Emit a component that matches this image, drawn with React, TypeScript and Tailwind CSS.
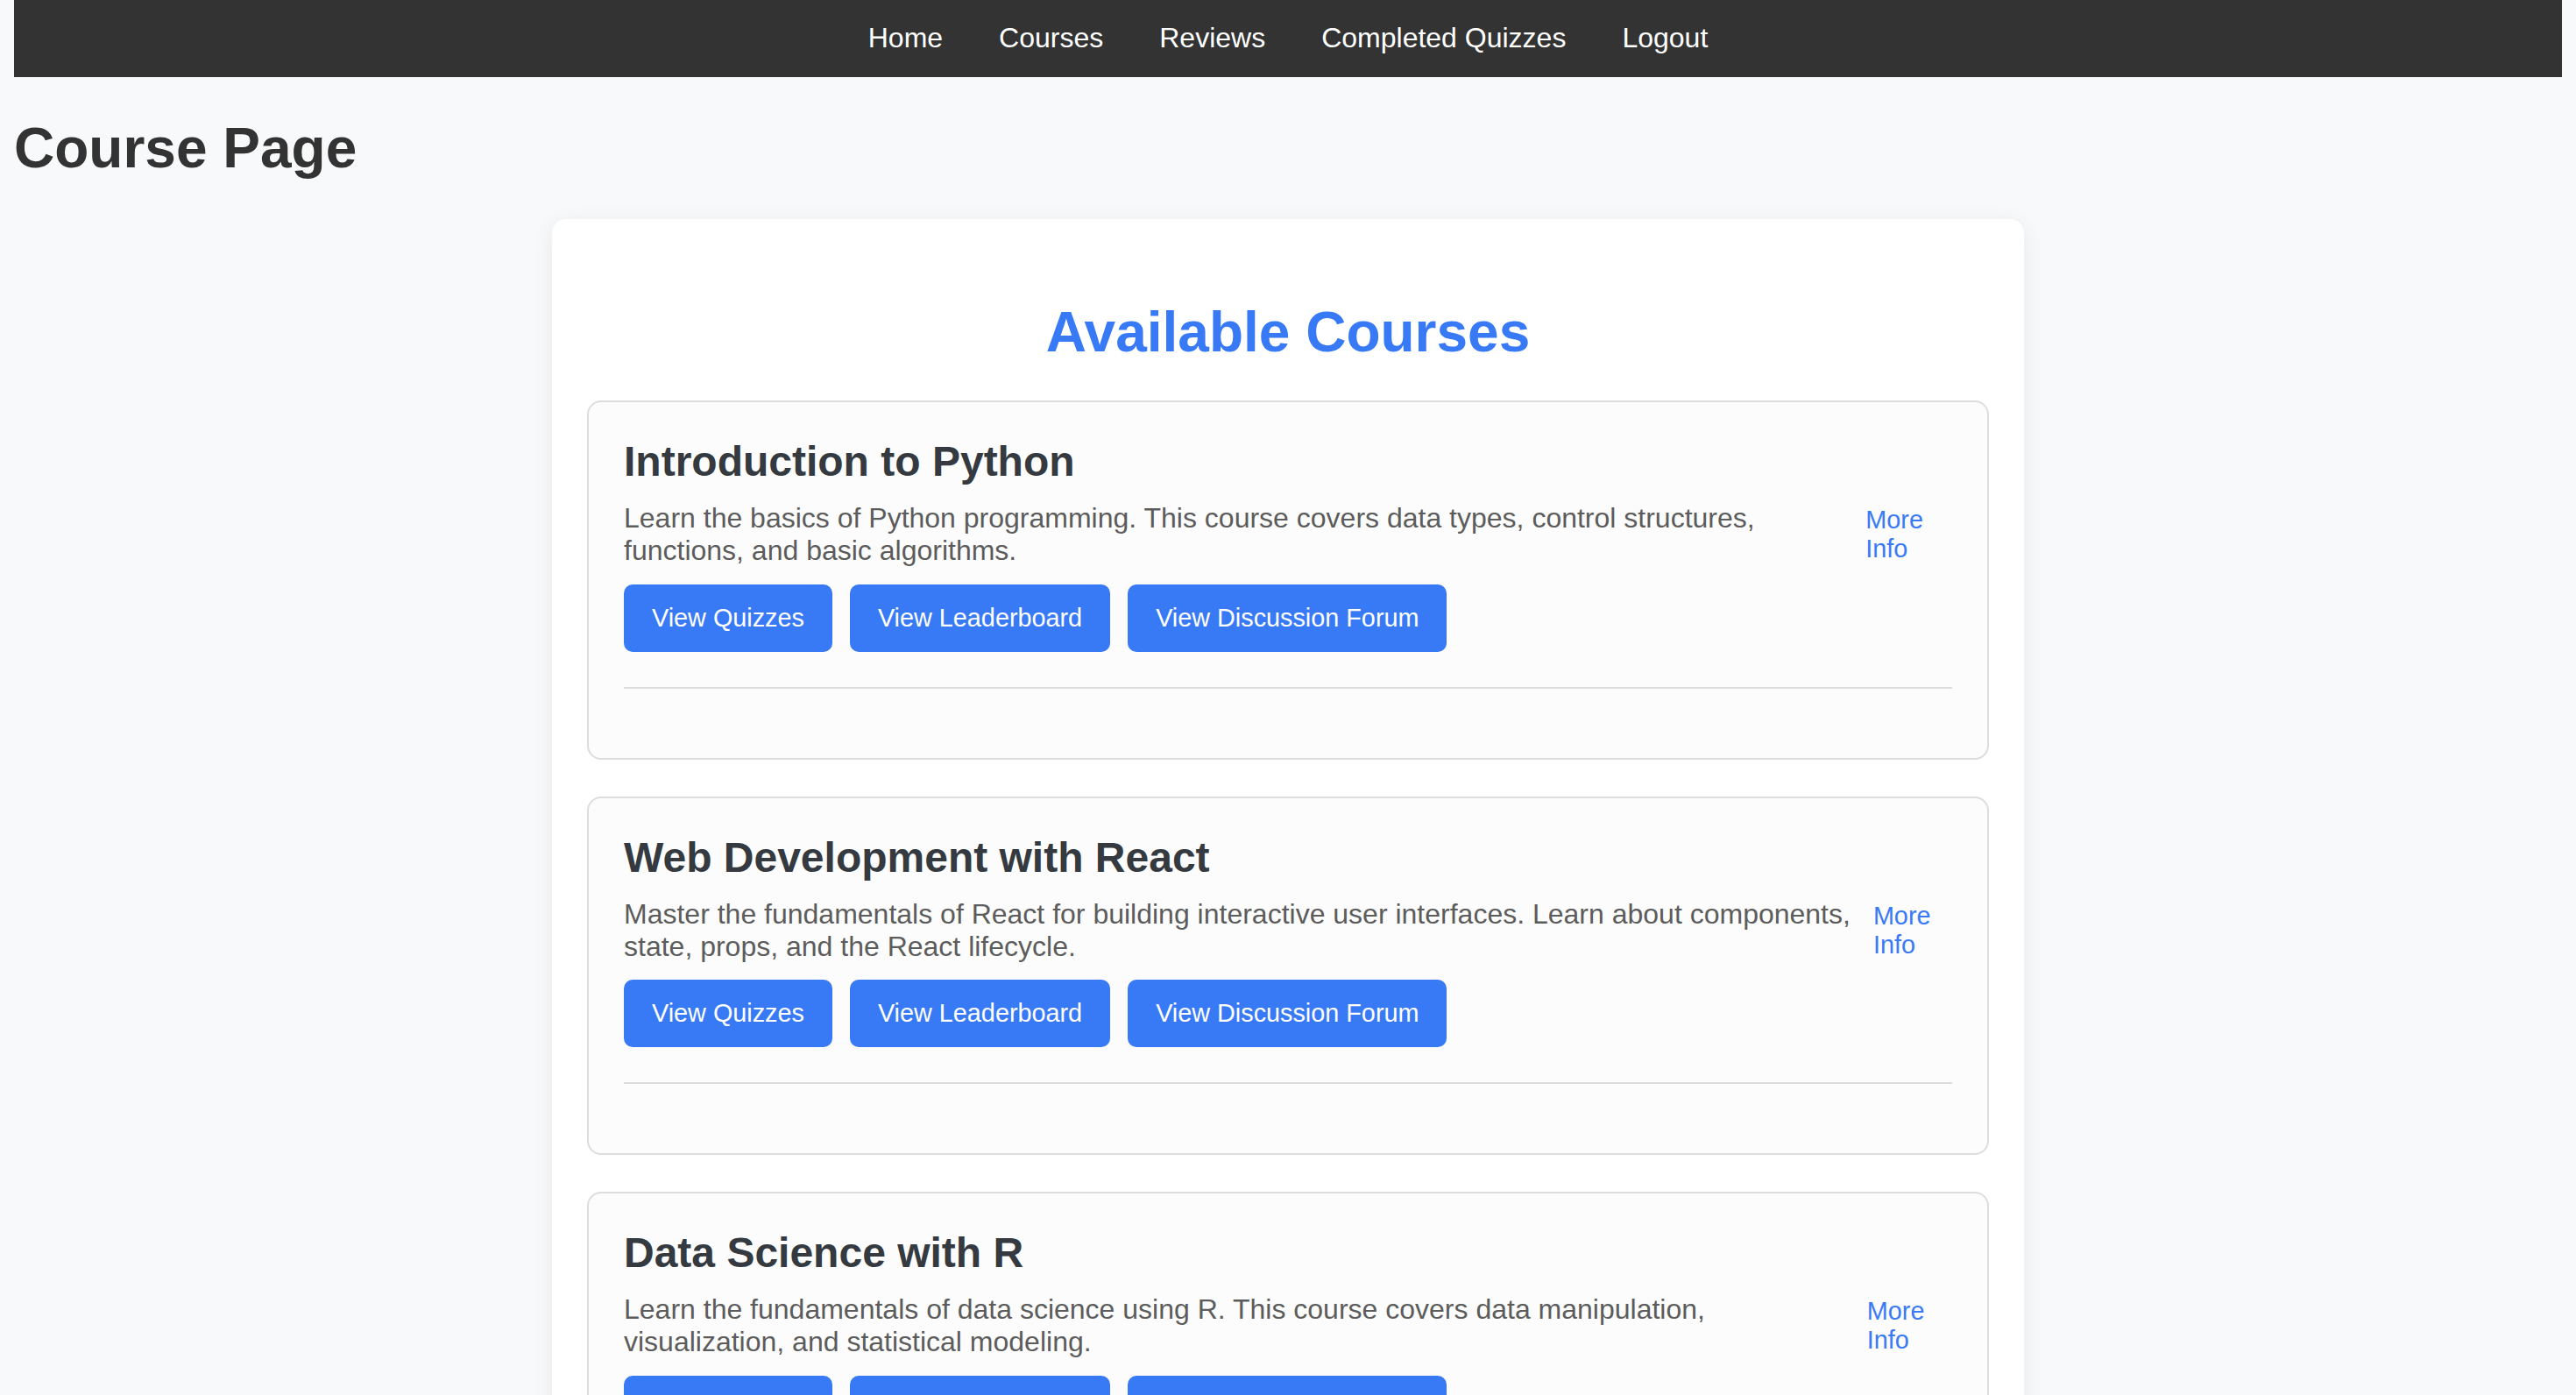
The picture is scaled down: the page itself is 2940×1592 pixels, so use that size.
import React from "react";

type Course = {
  id: number;
  title: string;
  description: string;
};

const courses: Course[] = [
  {
    id: 1,
    title: "Introduction to Python",
    description:
      "Learn the basics of Python programming. This course covers data types, control structures, functions, and basic algorithms.",
  },
  {
    id: 2,
    title: "Web Development with React",
    description:
      "Master the fundamentals of React for building interactive user interfaces. Learn about components, state, props, and the React lifecycle.",
  },
  {
    id: 3,
    title: "Data Science with R",
    description:
      "Learn the fundamentals of data science using R. This course covers data manipulation, visualization, and statistical modeling.",
  },
];

const navLinks = ["Home", "Courses", "Reviews", "Completed Quizzes", "Logout"];

function CourseCard({ course }: { course: Course }) {
  return (
    <div className="mb-[42px] rounded-[16px] border-2 border-[#dddddd] bg-[#fcfcfc] px-[40px] pt-[40px] pb-[40px]">
      <h3 className="mb-[19px] text-[48px] leading-[55px] font-bold text-[#343a40]">
        {course.title}
      </h3>

      <div className="flex items-center">
        <p className="text-[32px] leading-[36.8px] text-[#5c5c5c]">{course.description}</p>
        <a href="#" className="text-[28.8px] leading-[33px] text-[#3a7af5]">
          More Info
        </a>
      </div>

      <div className="mt-[20px] flex gap-[20px]">
        {["View Quizzes", "View Leaderboard", "View Discussion Forum"].map((label) => (
          <button
            key={label}
            className="rounded-[10px] bg-[#387af6] px-[32px] py-[22px] text-[28.8px] leading-[33px] text-white"
          >
            {label}
          </button>
        ))}
      </div>

      <hr className="mt-[40px] mb-[39px] border-t-2 border-[#dddddd]" />
    </div>
  );
}

export default function App() {
  return (
    <div className="min-h-screen bg-[#f8f9fa] px-[16px] font-['Liberation_Sans',Arial,sans-serif]">
      <nav className="flex h-[88px] justify-center bg-[#333333] pt-[25px]">
        {navLinks.map((link) => (
          <a key={link} href="#" className="px-[32px] text-[32px] leading-[36.8px] text-white">
            {link}
          </a>
        ))}
      </nav>

      <h1 className="mt-[45px] mb-[43px] text-[64px] leading-[73.6px] font-bold text-[#333333]">
        Course Page
      </h1>

      <section className="mx-auto w-[1680px] rounded-[16px] bg-white p-[40px] shadow-[0_4px_24px_rgba(0,0,0,0.07)]">
        <h2 className="mt-[53px] mb-[41px] text-center text-[64px] leading-[73.6px] font-bold text-[#387af6]">
          Available Courses
        </h2>

        {courses.map((course) => (
          <CourseCard key={course.id} course={course} />
        ))}
      </section>
    </div>
  );
}
